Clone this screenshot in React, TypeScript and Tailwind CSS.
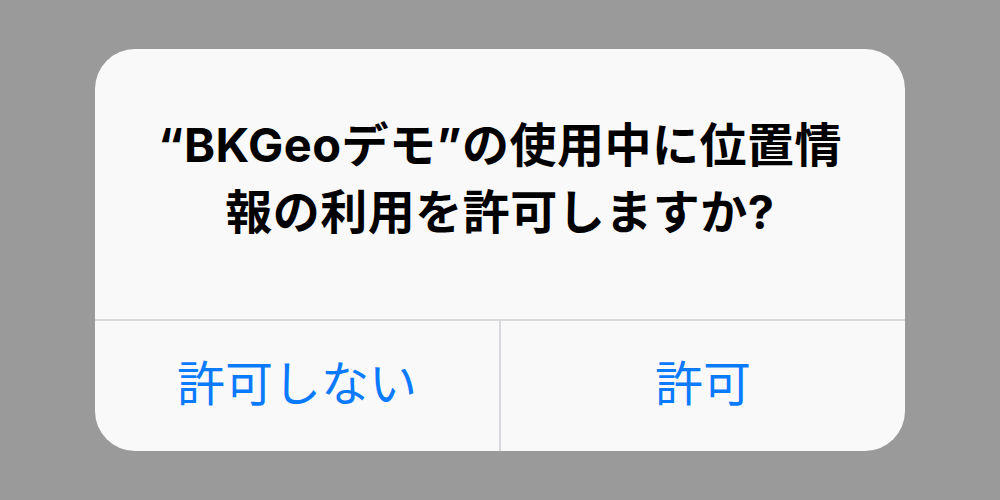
export default function App() {
  return (
    <div className="w-[1000px] h-[500px] bg-[#9a9a9a] flex items-center justify-center font-['Inter','Noto_Sans_CJK_JP',sans-serif]">
      <div className="w-[810px] h-[402px] mt-[-1px] rounded-[40px] bg-[#f9f9f9] flex flex-col overflow-hidden">
        {/* Title */}
        <div className="h-[270px] flex items-center justify-center pb-[12px]">
          <p className="text-[47px] font-bold leading-[67px] text-center text-black tracking-[0.5px]">
            “BKGeoデモ”の使用中に位置情
            <br />
            報の利用を許可しますか?
          </p>
        </div>
        <div className="h-[2px] bg-[#d9d9dd]" />
        {/* Buttons */}
        <div className="flex-1 flex">
          <button className="flex-1 flex items-center justify-center text-[48px] text-[#0a7aff] pb-[4px]">
            許可しない
          </button>
          <div className="w-[2px] bg-[#d9d9dd]" />
          <button className="flex-1 flex items-center justify-center text-[48px] text-[#0a7aff] pb-[4px]">
            許可
          </button>
        </div>
      </div>
    </div>
  )
}
